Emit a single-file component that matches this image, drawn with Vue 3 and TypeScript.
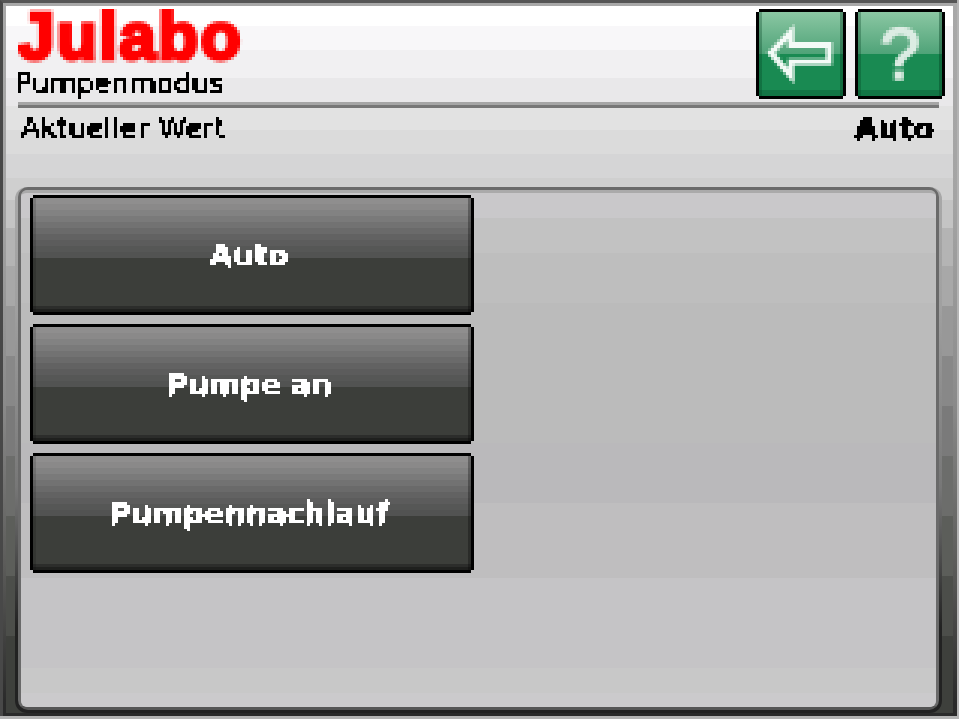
<template>
  <div class="screen">
    <svg class="defs" width="0" height="0" aria-hidden="true">
      <filter id="pixel" x="0" y="0" width="100%" height="100%" color-interpolation-filters="sRGB">
        <feConvolveMatrix result="avg" order="3" divisor="9" kernelMatrix="1 1 1 1 1 1 1 1 1" preserveAlpha="false" />
        <feFlood x="1" y="1" width="1" height="1" />
        <feComposite width="3" height="3" />
        <feTile result="grid" />
        <feComposite in="avg" in2="grid" operator="in" />
        <feMorphology operator="dilate" radius="1" />
        <feComponentTransfer>
          <feFuncA type="discrete" tableValues="0 0 0 0 1 1 1 1 1 1 1 1" />
        </feComponentTransfer>
      </filter>
      <filter id="pixelSoft" x="0" y="0" width="100%" height="100%" color-interpolation-filters="sRGB">
        <feConvolveMatrix result="avg" order="3" divisor="9" kernelMatrix="1 1 1 1 1 1 1 1 1" preserveAlpha="false" />
        <feFlood x="1" y="1" width="1" height="1" />
        <feComposite width="3" height="3" />
        <feTile result="grid" />
        <feComposite in="avg" in2="grid" operator="in" />
        <feMorphology operator="dilate" radius="1" />
      </filter>
    </svg>
    <div class="bezel">
      <div class="surface">
        <header class="top">
          <div class="brand">
            <div class="logo soft">Julabo</div>
            <div class="title px">Pumpenmodus</div>
          </div>
          <div class="actions">
            <button class="green" type="button" aria-label="Zurück">
              <svg class="soft" width="84" height="84" viewBox="0 0 84 84">
                <path class="arrow" d="M12 41 L32 20 L32 33 L70 33 L70 50 L32 50 L32 64 Z" />
              </svg>
            </button>
            <button class="green" type="button">
              <span class="help soft">?</span>
            </button>
          </div>
        </header>
        <div class="rule"></div>
        <div class="current">
          <span class="px">Aktueller Wert</span>
          <strong class="px">{{ selected }}</strong>
        </div>
        <section class="panel">
          <div class="panelLine">
            <div class="panelBody">
              <button v-for="mode in modes" :key="mode" class="mode" type="button">
                <span class="px">{{ mode }}</span>
              </button>
            </div>
          </div>
        </section>
      </div>
    </div>
  </div>
</template>

<script setup lang="ts">
const selected = 'Auto'
const modes: string[] = ['Auto', 'Pumpe an', 'Pumpennachlauf']
</script>

<style>
html,
body {
  margin: 0;
  background: #b0b0b0;
}
</style>

<style scoped>
.defs {
  display: block;
}

.screen {
  width: 959px;
  height: 719px;
  box-sizing: border-box;
  padding: 0 2px 3px 0;
  background: #b4b4b4;
  overflow: hidden;
  font-family: 'DejaVu Sans', sans-serif;
}

.bezel {
  height: 100%;
  box-sizing: border-box;
  border-top: 3px solid #555;
  border-left: 3px solid #484848;
  padding: 3px 4px 3px 3px;
  background: linear-gradient(#a8a8a8 0, #a4a4a4 200px, #8a8a8a 400px, #5c5c5a 560px, #2a2a2a 700px);
}

.surface {
  height: 100%;
  display: flex;
  flex-direction: column;
  background: linear-gradient(
    #ffffff 0 20px,
    #f8f7f9 20px 44px,
    #f1f0f2 44px 72px,
    #e9e8ea 72px 100px,
    #e2e2e2 100px 124px,
    #dbdbdb 124px 148px,
    #d5d5d6 148px 172px,
    #cfcfcf 172px 194px,
    #c4c4c4 194px 222px,
    #b4b4b4 222px 260px,
    #a8a8a8 260px 300px,
    #989898 300px 350px,
    #888888 350px 400px,
    #7a7a7a 400px 450px,
    #6c6d6b 450px 510px,
    #5c5e5a 510px 570px,
    #4c4e4a 570px 630px,
    #3e403c 630px
  );
}

.top {
  height: 96px;
  flex: none;
  box-sizing: border-box;
  padding: 3px 8px 0 12px;
  display: flex;
  justify-content: space-between;
}

.logo {
  width: 240px;
  height: 60px;
  margin-top: -3px;
  font-family: 'Liberation Sans', sans-serif;
  font-size: 66px;
  line-height: 60px;
  font-weight: 700;
  letter-spacing: 2px;
  color: #ff0000;
  -webkit-text-stroke: 4px #ff0000;
}

.title {
  margin-left: -3px;
  font-size: 28px;
  line-height: 36px;
  color: #000;
}

.actions {
  display: flex;
  gap: 9px;
}

.green {
  width: 90px;
  height: 90px;
  padding: 0;
  display: flex;
  align-items: center;
  justify-content: center;
  border: 3px solid #000;
  background:
    linear-gradient(to right, rgba(0, 60, 30, 0.3) 3px, transparent 3px calc(100% - 3px), rgba(0, 60, 30, 0.4) calc(100% - 3px)),
    linear-gradient(#8bc7a3 0, #4fa378 42px, #198a52 42px, #198a52 78px, #127545 78px);
  clip-path: polygon(3px 0, calc(100% - 3px) 0, calc(100% - 3px) 3px, 100% 3px, 100% calc(100% - 3px), calc(100% - 3px) calc(100% - 3px), calc(100% - 3px) 100%, 3px 100%, 3px calc(100% - 3px), 0 calc(100% - 3px), 0 3px, 3px 3px);
}

.arrow {
  fill: none;
  stroke: #f4fbf7;
  stroke-width: 6;
}

.help {
  display: block;
  font-family: 'Liberation Sans', sans-serif;
  font-weight: 400;
  font-size: 72px;
  line-height: 84px;
  color: #dcece3;
  -webkit-text-stroke: 2.5px #dcece3;
}

.rule {
  height: 6px;
  flex: none;
  margin: 0 14px 0 12px;
  background: linear-gradient(#a6a6a6 3px, #777 3px);
}

.current {
  height: 79px;
  flex: none;
  box-sizing: border-box;
  padding: 3px 19px 0 15px;
  display: flex;
  justify-content: space-between;
  align-items: flex-start;
  font-size: 28px;
  line-height: 36px;
  letter-spacing: 0.3px;
  color: #000;
}

.current strong {
  font-size: 30px;
  font-weight: 700;
  letter-spacing: 0;
}

.panel {
  flex: 1;
  min-height: 0;
  margin: 0 11px 0 9px;
  padding: 0 3px 3px;
  border-radius: 12px;
  background: linear-gradient(#a8a8a8 0, #a0a0a0 120px, #777 300px, #222 440px);
}

.panelLine {
  height: 100%;
  box-sizing: border-box;
  border: 3px solid #6a6a6a;
  border-bottom-color: #555;
  border-radius: 10px;
  background: #aaa;
}

.panelBody {
  height: 100%;
  box-sizing: border-box;
  padding: 2px 9px 0;
  display: flex;
  flex-direction: column;
  gap: 9px;
  border-top: 3px solid #aaa;
  border-radius: 6px;
  background: linear-gradient(
    #c9c8ca 0 25px,
    #c2c2c2 25px 60px,
    #bebebe 60px 110px,
    #bbbbbb 110px 250px,
    #bab9bb 250px 310px,
    #bfbebf 310px 385px,
    #c5c4c6 385px 475px,
    #c8c8c8 475px 500px,
    #cbcacc 500px
  );
}

.mode {
  width: 444px;
  height: 120px;
  flex: none;
  padding: 0 6px 0 0;
  border: 3px solid #000;
  display: flex;
  align-items: center;
  justify-content: center;
  font-family: 'DejaVu Sans', sans-serif;
  font-size: 30px;
  font-weight: 700;
  letter-spacing: -0.3px;
  color: #fff;
  background:
    linear-gradient(to right, rgba(0, 0, 0, 0.15) 3px, transparent 3px calc(100% - 3px), rgba(0, 0, 0, 0.3) calc(100% - 3px)),
    linear-gradient(
      #8f8e8e 0 6px,
      #8a8989 6px 12px,
      #828282 12px 18px,
      #7a7a7a 18px 24px,
      #727272 24px 30px,
      #6a6a6a 30px 36px,
      #626262 36px 42px,
      #5c5c5c 42px 48px,
      #565756 48px 54px,
      #525352 54px 60px,
      #3c3e3a 60px 108px,
      #2c2d2b 108px 111px,
      #1f201e 111px
    );
  clip-path: polygon(3px 0, calc(100% - 3px) 0, calc(100% - 3px) 3px, 100% 3px, 100% calc(100% - 3px), calc(100% - 3px) calc(100% - 3px), calc(100% - 3px) 100%, 3px 100%, 3px calc(100% - 3px), 0 calc(100% - 3px), 0 3px, 3px 3px);
}

.px {
  display: inline-block;
  filter: url(#pixel);
}

.soft {
  filter: url(#pixelSoft);
}
</style>
